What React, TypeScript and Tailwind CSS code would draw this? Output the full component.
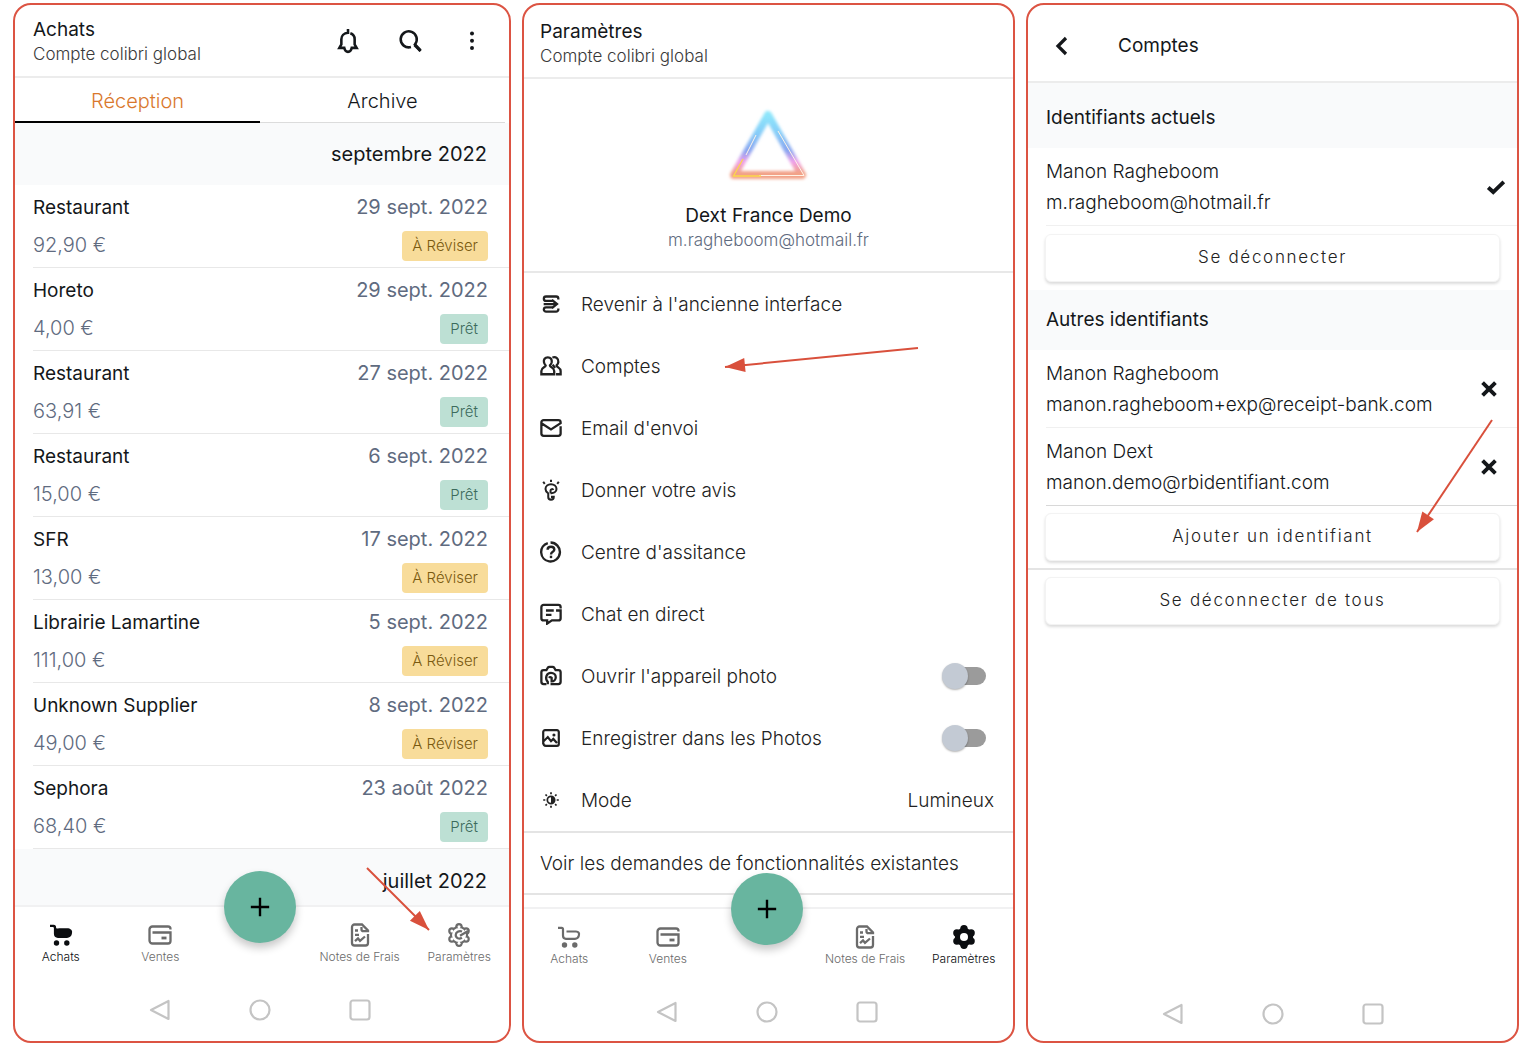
import React from 'react';
import clsx from 'clsx';

type Status = 'review' | 'ready';

interface Receipt {
  id: number;
  supplier: string;
  date: string;
  amount: string;
  status: Status;
}

const receipts: Receipt[] = [
  { id: 1, supplier: 'Restaurant', date: '29 sept. 2022', amount: '92,90 €', status: 'review' },
  { id: 2, supplier: 'Horeto', date: '29 sept. 2022', amount: '4,00 €', status: 'ready' },
  { id: 3, supplier: 'Restaurant', date: '27 sept. 2022', amount: '63,91 €', status: 'ready' },
  { id: 4, supplier: 'Restaurant', date: '6 sept. 2022', amount: '15,00 €', status: 'ready' },
  { id: 5, supplier: 'SFR', date: '17 sept. 2022', amount: '13,00 €', status: 'review' },
  { id: 6, supplier: 'Librairie Lamartine', date: '5 sept. 2022', amount: '111,00 €', status: 'review' },
  { id: 7, supplier: 'Unknown Supplier', date: '8 sept. 2022', amount: '49,00 €', status: 'review' },
  { id: 8, supplier: 'Sephora', date: '23 août 2022', amount: '68,40 €', status: 'ready' },
];

/* Icons */

interface IconProps {
  className?: string;
  weight?: number;
  children: React.ReactNode;
}

const Icon: React.FC<IconProps> = ({ className = 'size-6', weight = 2.2, children }) => (
  <svg viewBox="0 0 24 24" className={className} fill="none" stroke="currentColor" strokeWidth={weight} aria-hidden="true">
    {children}
  </svg>
);

const BellIcon = () => (
  <Icon className="size-7">
    <path d="M12 1.800V5C8.500 5.200 6.300 7.500 6.300 10.500V15L4.600 17.900H8.800C9.200 20 10.400 21.300 12 21.300S14.800 20 15.200 17.900H19.400L17.700 15V10.500C17.700 8 16.500 6.200 14 5.400" />
  </Icon>
);

const SearchIcon = () => (
  <Icon className="size-7">
    <path d="M12.800 17.200A6.900 6.900 0 1 1 16.200 15L21 20.800" />
    <path d="M16 15.200l5 5" strokeWidth="2.800" />
  </Icon>
);

const DotsIcon = () => (
  <Icon className="size-7">
    <g fill="currentColor" stroke="none">
      <circle cx="12" cy="5.500" r="1.700" />
      <circle cx="12" cy="11.700" r="1.700" />
      <circle cx="12" cy="18" r="1.700" />
    </g>
  </Icon>
);

const CartIcon = ({ filled }: { filled?: boolean }) => (
  <Icon>
    <path d="M1 2.800H4.600C5.400 2.800 6 3.200 6 4.200V10.500C6 12.700 7 13.800 9 13.800H18C20 13.800 21.300 12.700 21.800 10.800C22.600 8 21.500 6.500 19 6.500H9.500" fill={filled ? 'currentColor' : 'none'} />
    {filled && <path d="M5.500 5.500h15v8H7z" fill="currentColor" stroke="none" />}
    <circle cx="7.500" cy="20" r="2.700" fill="currentColor" stroke="none" />
    <circle cx="17.800" cy="20" r="2.700" fill="currentColor" stroke="none" />
  </Icon>
);

const WalletIcon = () => (
  <Icon weight={2.3}>
    <path d="M22.500 6.500V6A2.500 2.500 0 0 0 20 3.500H4.500A3 3 0 0 0 1.500 6.500V17.500A3 3 0 0 0 4.500 20.500H20A2.500 2.500 0 0 0 22.500 18V9.500H4.500" />
    <path d="M13.500 15h5" strokeWidth="2.800" />
  </Icon>
);

const NotesIcon = () => (
  <Icon weight={2.3}>
    <path d="M20 11V20A2.500 2.500 0 0 1 17.500 22.500H6.500A2.500 2.500 0 0 1 4 20V4A2.500 2.500 0 0 1 6.500 1.500H14L20 7.500V8.200H15.500C14 8.200 13.500 7.500 13.500 6.200V4" />
    <path d="M7 7.500h3M7 11.800h4" />
    <path d="M7 18.200l3-2.700 2 2.300 5-4.300" />
  </Icon>
);

// Six rounded lobes on a 60 degree step
const lobes = [0, 60, 120, 180, 240, 300].map(deg => {
  const rad = ((deg - 90) * Math.PI) / 180;
  return { deg, cx: 12 + 8.2 * Math.cos(rad), cy: 12 + 8.2 * Math.sin(rad) };
});

const GearIcon = ({ filled }: { filled?: boolean }) => (
  <Icon>
    <g fill="currentColor" stroke="none">
      <circle cx="12" cy="12" r="9.200" />
      {lobes.map(l => <circle key={l.deg} cx={l.cx} cy={l.cy} r="3.700" />)}
    </g>
    {filled ? (
      <circle cx="12" cy="12" r="4" fill="#fff" stroke="none" />
    ) : (
      <>
        <g fill="#fff" stroke="none">
          <circle cx="12" cy="12" r="7" />
          {lobes.map(l => <circle key={l.deg} cx={l.cx} cy={l.cy} r="1.500" />)}
        </g>
        <path d="M21 8L13 12.800M15 8.600C12 7.400 8.700 9.200 8.700 12.100C8.700 15.200 12.300 16.700 14.900 14.600" />
      </>
    )}
  </Icon>
);

const SwitchBackIcon = () => (
  <Icon className="size-[22px]" weight={2.5}>
    <path d="M20 7.200V6.200A2.400 2.400 0 0 0 17.600 3.800H6.600A2.400 2.400 0 0 0 4.200 6.200A2.400 2.400 0 0 0 6.600 8.600H14" />
    <path d="M20 17V18A2.400 2.400 0 0 1 17.600 20.400H6.600A2.400 2.400 0 0 1 4.200 18A2.400 2.400 0 0 1 6.600 15.600H14" />
    <path d="M4 12.100h13M13 7.600l5.500 4.500L13 16.600" />
  </Icon>
);

const PeopleIcon = () => (
  <Icon className="size-[22px]" weight={2.5}>
    <path d="M8.500 2.500C5.300 2.500 3.800 5 4.300 7.800C4.600 9.500 5.300 10.500 6.200 11.400C6.200 13.700 1.500 13.400 1.500 17.500V21H15.500V17.500C15.500 13.400 10.800 13.700 10.800 11.400C11.800 10.500 12.500 9.500 12.800 7.800C13.200 5 11.700 2.500 8.500 2.500z" />
    <path d="M13.500 2.700C17.500 1.500 20.500 4 20 7.700C19.800 9.400 19.100 10.500 18.100 11.400C18.100 13.700 22.500 13.400 22.500 17.500V21H17.500M13.800 10.500l2.700 3.500" />
  </Icon>
);

const MailIcon = () => (
  <Icon className="size-[22px]" weight={2.5}>
    <path d="M22.500 10V18A2.500 2.500 0 0 1 20 20.500H4A2.500 2.500 0 0 1 1.500 18V6A2.500 2.500 0 0 1 4 3.500H20A2.500 2.500 0 0 1 22.500 6V6.800L12 13.500L2 7" />
  </Icon>
);

const BulbIcon = () => (
  <Icon className="size-[22px]">
    <path d="M11.500 15.500C15 15.800 18 14 18 10.800C18 7.600 15.300 5.600 12 5.600S6 7.600 6 10.800C6 13.300 7.500 14.500 9 15.800V19.500C9 21.500 10 22.500 12 22.500S15 21.500 15 19.500H12" />
    <path d="M11.500 15.500V12.500C11.500 10.800 14 10.500 14.500 12" />
    <path d="M12 .800v2.400M3.500 3l1.700 2.200M20.500 3l-1.700 2.200" />
  </Icon>
);

const HelpIcon = () => (
  <Icon className="size-[22px]" weight={2.6}>
    <path d="M8.500 2.200A10.300 10.300 0 0 0 10 22.200M11.500 1.700A10.300 10.300 0 1 1 10 22.200" />
    <path d="M8.300 9.600C8.300 7.600 9.800 6.300 12 6.300S15.600 7.600 15.600 9.500C15.600 11.900 12 11.800 12 14.600" />
    <path d="M12 16v2.700" />
  </Icon>
);

const ChatIcon = () => (
  <Icon className="size-[22px]" weight={2.5}>
    <path d="M22.500 6V4.500A2.500 2.500 0 0 0 20 2H4A2.500 2.500 0 0 0 1.500 4.500V16.500A2.500 2.500 0 0 0 4 19H7.800V22.500L13 19H20A2.500 2.500 0 0 0 22.500 16.500V8.200H17.500" />
    <path d="M6.500 8.200H15M6.500 13h6" />
  </Icon>
);

const CameraIcon = () => (
  <Icon className="size-[22px]" weight={2.5}>
    <path d="M7 20.800H4A2.500 2.500 0 0 1 1.500 18.300V8A2.500 2.500 0 0 1 4 5.500H7L8.500 3C8.900 2.400 9.500 2 10.300 2H13.700C14.500 2 15.100 2.400 15.500 3L17 5.500H20A2.500 2.500 0 0 1 22.500 8V18.300A2.500 2.500 0 0 1 20 20.800H11.500" />
    <path d="M8.500 21V18.500C4.800 14 7.300 8.500 12 8.500C15 8.500 17.200 10.700 17.200 13.300S15.200 17.900 12.700 17.900V14C11.500 12.800 10.500 13 9.800 14" />
  </Icon>
);

const PhotoIcon = () => (
  <Icon className="size-[22px]" weight={2.4}>
    <path d="M6 20.500H18.500A2 2 0 0 0 20.500 18.500V5.500A2 2 0 0 0 18.500 3.500H5.500A2 2 0 0 0 3.500 5.500V16L8.500 11L12 15.500L14.500 13L18.500 17.500M3.500 16.500C3.500 19 4.500 20.500 6.500 20.500" />
    <circle cx="15.200" cy="8.700" r="1.700" fill="currentColor" stroke="none" />
  </Icon>
);

const BrightnessIcon = () => (
  <Icon className="size-[22px]" weight={1.9}>
    <circle cx="12" cy="12" r="4" />
    <path d="M12 8v8a4 4 0 0 0 0-8z" fill="currentColor" stroke="none" />
    <path d="M12 3.500v2.300M12 18.200v2.300M3.500 12h2.300M18.200 12h2.300M6 6l1.500 1.500M16.500 16.500L18 18M6 18l1.500-1.500M16.500 7.500L18 6" />
  </Icon>
);

const BackIcon = () => (
  <Icon>
    <path d="M16 4l-8 8 8 8" strokeWidth="3.200" />
  </Icon>
);

const CheckIcon = () => (
  <Icon className="size-[22px]" weight={4.2}>
    <path d="M3.500 12.500l5.500 5L20.500 6.500" />
  </Icon>
);

const CrossIcon = () => (
  <Icon className="size-[22px]" weight={4.2}>
    <path d="M5 5l14 14M19 5L5 19" />
  </Icon>
);

const NeonTriangle = () => (
  <svg viewBox="0 0 90 84" className="h-[84px] w-[90px]" role="img" aria-label="Dext France Demo">
    <defs>
      <linearGradient id="neon" x1="0" y1="0" x2="0" y2="1">
        <stop offset="0" stopColor="#8ee6fb" />
        <stop offset="0.3" stopColor="#86cdf8" />
        <stop offset="0.6" stopColor="#8aa4f0" />
        <stop offset="0.78" stopColor="#f0a0ea" />
        <stop offset="0.96" stopColor="#f2a287" />
      </linearGradient>
      <filter id="glow" x="-20%" y="-20%" width="140%" height="140%">
        <feGaussianBlur stdDeviation="1.8" />
      </filter>
    </defs>
    <path d="M44 13L78 73H10z" fill="none" stroke="url(#neon)" strokeWidth="8" strokeLinejoin="round" filter="url(#glow)" />
    <path d="M44 13L78 73H10z" fill="none" stroke="url(#neon)" strokeWidth="3" strokeLinejoin="round" opacity="0.5" />
    <path d="M54 29l26 44.500H35M32 33L22 53" fill="none" stroke="#fff3e6" strokeWidth="1" />
    <path d="M19 57l-9.500 17H37" fill="none" stroke="#fbd84a" strokeWidth="1.300" />
  </svg>
);

/* Annotation arrow with a solid head */

interface ArrowProps {
  className: string;
  from: [number, number];
  to: [number, number];
}

const Arrow: React.FC<ArrowProps> = ({ className, from, to }) => {
  const angle = (Math.atan2(to[1] - from[1], to[0] - from[0]) * 180) / Math.PI;
  return (
    <svg className={clsx('pointer-events-none overflow-visible', className)} aria-hidden="true">
      <path d={`M${from[0]} ${from[1]}L${to[0]} ${to[1]}`} stroke="#d9503c" strokeWidth="2" />
      <path d="M0 0L-20 -7V7z" fill="#d9503c" transform={`translate(${to[0]} ${to[1]}) rotate(${angle})`} />
    </svg>
  );
};

/* Shared pieces */

const Panel: React.FC<{ children: React.ReactNode }> = ({ children }) => (
  <section className="relative flex min-w-0 flex-col overflow-hidden rounded-[18px] border-2 border-[#dc5443] bg-white">
    {children}
  </section>
);

const Badge = ({ status }: { status: Status }) => (
  <span
    className={clsx(
      'rounded-[4px] px-[10px] text-[15px] leading-[30px] font-light',
      status === 'review' ? 'bg-[#f8dc9a] text-[#7a5a10]' : 'bg-[#bde0d4] text-[#3c6b5c]',
    )}
  >
    {status === 'review' ? 'À Réviser' : 'Prêt'}
  </span>
);

const SystemBar = () => (
  <div className="flex h-[50px] items-center justify-center gap-[78px]">
    <svg viewBox="0 0 22 22" className="size-[22px]" fill="none" stroke="#c4c4c4" strokeWidth="2.200" strokeLinejoin="round" aria-hidden="true">
      <path d="M19.500 2v18L2 11z" />
    </svg>
    <svg viewBox="0 0 22 22" className="size-[22px]" fill="none" stroke="#c4c4c4" strokeWidth="2.200" aria-hidden="true">
      <circle cx="11" cy="11" r="9.500" />
    </svg>
    <svg viewBox="0 0 22 22" className="size-[22px]" fill="none" stroke="#c4c4c4" strokeWidth="2.200" aria-hidden="true">
      <rect x="1.500" y="1.500" width="19" height="19" rx="2.500" />
    </svg>
  </div>
);

const BottomNav = ({ active }: { active: string }) => {
  const item = (label: string, icon: React.ReactNode) => (
    <a
      href="#"
      className={clsx(
        'flex flex-col items-center text-xs font-light whitespace-nowrap',
        label === active ? 'text-[#0b0d10]' : 'text-[#6b6b6b]',
      )}
    >
      {icon}
      <span className="leading-5">{label}</span>
    </a>
  );

  return (
    <nav className="relative grid h-20 grid-cols-5 border-t-2 border-[#f1f1f2] bg-white pt-4">
      {item('Achats', <CartIcon filled={active === 'Achats'} />)}
      {item('Ventes', <WalletIcon />)}
      <span />
      {item('Notes de Frais', <NotesIcon />)}
      {item('Paramètres', <GearIcon filled={active === 'Paramètres'} />)}
      <button
        aria-label="Ajouter"
        className="absolute -top-9 left-1/2 grid size-[72px] -translate-x-1/2 place-items-center rounded-full bg-[#68b59f] text-black shadow-[0_5px_9px_rgba(0,0,0,0.22)]"
      >
        <Icon className="size-[22px]">
          <path d="M12 2v20M2 12h20" strokeWidth="2.600" />
        </Icon>
      </button>
    </nav>
  );
};

/* Achats */

const PurchasesPanel = () => (
  <Panel>
    <header className="flex h-[73px] items-center justify-between border-b-2 border-[#ececec] pr-[23px] pl-[18px]">
      <div className="pt-0.5">
        <h1 className="text-[19px] leading-6">Achats</h1>
        <p className="text-[17px] leading-6 font-light text-[#3a3a3a]">Compte colibri global</p>
      </div>
      <div className="flex gap-[34px]">
        <button aria-label="Notifications"><BellIcon /></button>
        <button aria-label="Rechercher"><SearchIcon /></button>
        <button aria-label="Plus d'options"><DotsIcon /></button>
      </div>
    </header>

    <div className="grid h-[45px] grid-cols-2 pr-1 text-xl font-light" role="tablist">
      <button role="tab" aria-selected="true" className="border-b-2 border-black pt-0.5 text-[#d9782d]">Réception</button>
      <button role="tab" aria-selected="false" className="border-b border-[#dcdcdc] pt-0.5">Archive</button>
    </div>

    <h2 className="bg-[#f9fafb] pr-[22px] text-right text-xl leading-[62px]">septembre 2022</h2>
    <ul className="pl-[18px]">
      {receipts.map(r => (
        <li key={r.id} className="flex h-[83px] flex-col gap-2 border-b border-[#e8e8e8] pt-2 pr-[21px]">
          <div className="flex justify-between leading-[30px]">
            <span className="text-[19px]">{r.supplier}</span>
            <span className="text-xl text-[#5f6b80]">{r.date}</span>
          </div>
          <div className="flex justify-between leading-[30px]">
            <span className="text-xl font-light text-[#5f6b80]">{r.amount}</span>
            <Badge status={r.status} />
          </div>
        </li>
      ))}
    </ul>
    <h2 className="flex-1 bg-[#f9fafb] pt-[17px] pr-[22px] text-right text-xl leading-[30px]">juillet 2022</h2>

    <footer className="-ml-1 pb-[6px]">
      <BottomNav active="Achats" />
      <SystemBar />
    </footer>

    <Arrow className="absolute right-[78px] bottom-[109px] h-[66px] w-[66px]" from={[2, 2]} to={[64, 64]} />
  </Panel>
);

/* Paramètres */

const menu: { label: string; icon: React.ReactNode }[] = [
  { label: "Revenir à l'ancienne interface", icon: <SwitchBackIcon /> },
  { label: 'Comptes', icon: <PeopleIcon /> },
  { label: "Email d'envoi", icon: <MailIcon /> },
  { label: 'Donner votre avis', icon: <BulbIcon /> },
  { label: "Centre d'assitance", icon: <HelpIcon /> },
  { label: 'Chat en direct', icon: <ChatIcon /> },
];

const toggles: { id: string; label: string; icon: React.ReactNode }[] = [
  { id: 'open-camera', label: "Ouvrir l'appareil photo", icon: <CameraIcon /> },
  { id: 'save-photos', label: 'Enregistrer dans les Photos', icon: <PhotoIcon /> },
];

const SettingsPanel = () => (
  <Panel>
    <header className="h-[74px] border-b-2 border-[#ececec] px-4 pt-[15px]">
      <h1 className="text-[19px] leading-6">Paramètres</h1>
      <p className="text-[17px] leading-6 font-light text-[#3a3a3a]">Compte colibri global</p>
    </header>

    <div className="flex h-[194px] flex-col items-center border-b-2 border-[#e8e8e8] pt-[23px]">
      <NeonTriangle />
      <p className="mt-[18px] text-[19px] leading-6">Dext France Demo</p>
      <p className="text-[17px] leading-6 font-light text-[#5f6b80]">m.ragheboom@hotmail.fr</p>
    </div>

    <div className="text-[19px] font-light text-[#222]">
      {menu.map(m => (
        <a key={m.label} href="#" className="flex h-[62px] items-center gap-[19px] px-4">
          {m.icon}
          <span className="pt-0.5">{m.label}</span>
        </a>
      ))}
      {toggles.map(t => (
        <div key={t.id} className="flex h-[62px] items-center gap-[19px] pr-[27px] pl-4">
          {t.icon}
          <label htmlFor={t.id} className="flex-1 pt-0.5">{t.label}</label>
          <input
            id={t.id}
            type="checkbox"
            role="switch"
            className="relative h-[18px] w-10 appearance-none rounded-full bg-[#9b9b9b] before:absolute before:-top-1 before:-left-1 before:size-[26px] before:rounded-full before:bg-[#c3cad4] before:shadow-[0_1px_2px_rgba(0,0,0,0.3)] before:content-['']"
          />
        </div>
      ))}
      <button className="flex h-[62px] w-full items-center gap-[19px] pr-[19px] pl-4">
        <BrightnessIcon />
        <span className="pt-0.5">Mode</span>
        <span className="ml-auto pt-0.5">Lumineux</span>
      </button>
      <a href="#" className="block border-y-2 border-[#e4e4e4] px-4 pt-px leading-[59px] whitespace-nowrap">
        Voir les demandes de fonctionnalités existantes
      </a>
    </div>

    <div className="min-h-3 flex-1" />
    <footer className="-ml-1 pb-1">
      <BottomNav active="Paramètres" />
      <SystemBar />
    </footer>

    <Arrow className="absolute top-[340px] left-[199px] h-8 w-[198px]" from={[195, 3]} to={[2, 22]} />
  </Panel>
);

/* Comptes */

const SectionTitle: React.FC<{ children: React.ReactNode }> = ({ children }) => (
  <h2 className="bg-[#f9fafb] px-[18px] text-[19px] leading-[60px]">{children}</h2>
);

interface LoginRowProps {
  name: string;
  email: string;
  children: React.ReactNode;
  className?: string;
}

const LoginRow: React.FC<LoginRowProps> = ({ name, email, children, className }) => (
  <div className={clsx('ml-[18px] flex h-[78px] items-center justify-between border-b text-[19px] leading-[31px] font-light', className)}>
    <div>
      <p>{name}</p>
      <p>{email}</p>
    </div>
    {children}
  </div>
);

const WideButton: React.FC<{ children: React.ReactNode }> = ({ children }) => (
  <button className="h-12 w-full rounded-md border border-[#f3f3f3] bg-white text-[17px] font-light tracking-widest text-[#222] shadow-[0_2px_3px_rgba(0,0,0,0.14)]">
    {children}
  </button>
);

const AccountsPanel = () => (
  <Panel>
    <header className="flex h-[78px] items-center gap-11 border-b-2 border-[#ececec] px-[22px] pt-1.5">
      <button aria-label="Retour"><BackIcon /></button>
      <h1 className="text-[19px]">Comptes</h1>
    </header>

    <div className="bg-[#f9fafb] pt-[5px]"><SectionTitle>Identifiants actuels</SectionTitle></div>
    <LoginRow name="Manon Ragheboom" email="m.ragheboom@hotmail.fr" className="border-[#f0f0f0] pr-[10px]">
      <CheckIcon />
    </LoginRow>
    <div className="px-[17px] py-2"><WideButton>Se déconnecter</WideButton></div>

    <SectionTitle>Autres identifiants</SectionTitle>
    <LoginRow name="Manon Ragheboom" email="manon.ragheboom+exp@receipt-bank.com" className="border-[#f0f0f0] pr-[17px]">
      <button aria-label="Supprimer manon.ragheboom+exp@receipt-bank.com"><CrossIcon /></button>
    </LoginRow>
    <LoginRow name="Manon Dext" email="manon.demo@rbidentifiant.com" className="border-[#d8d8d8] pr-[17px]">
      <button aria-label="Supprimer manon.demo@rbidentifiant.com"><CrossIcon /></button>
    </LoginRow>
    <div className="border-b-2 border-[#e4e4e4] px-[17px] py-[7px]"><WideButton>Ajouter un identifiant</WideButton></div>
    <div className="px-[17px] pt-[7px]"><WideButton>Se déconnecter de tous</WideButton></div>

    <div className="flex-1" />
    <footer className="pb-0.5"><SystemBar /></footer>

    <Arrow className="absolute top-[413px] right-[23px] h-[118px] w-20" from={[78, 2]} to={[3, 114]} />
  </Panel>
);

export default function App() {
  return (
    <main className="grid min-h-screen grid-cols-[498fr_493fr_493fr] gap-[11px] bg-white pt-[3px] pr-[15px] pb-[21px] pl-[13px] font-[Inter,'Liberation_Sans',sans-serif] text-[#14171a]">
      <PurchasesPanel />
      <SettingsPanel />
      <AccountsPanel />
    </main>
  );
}
